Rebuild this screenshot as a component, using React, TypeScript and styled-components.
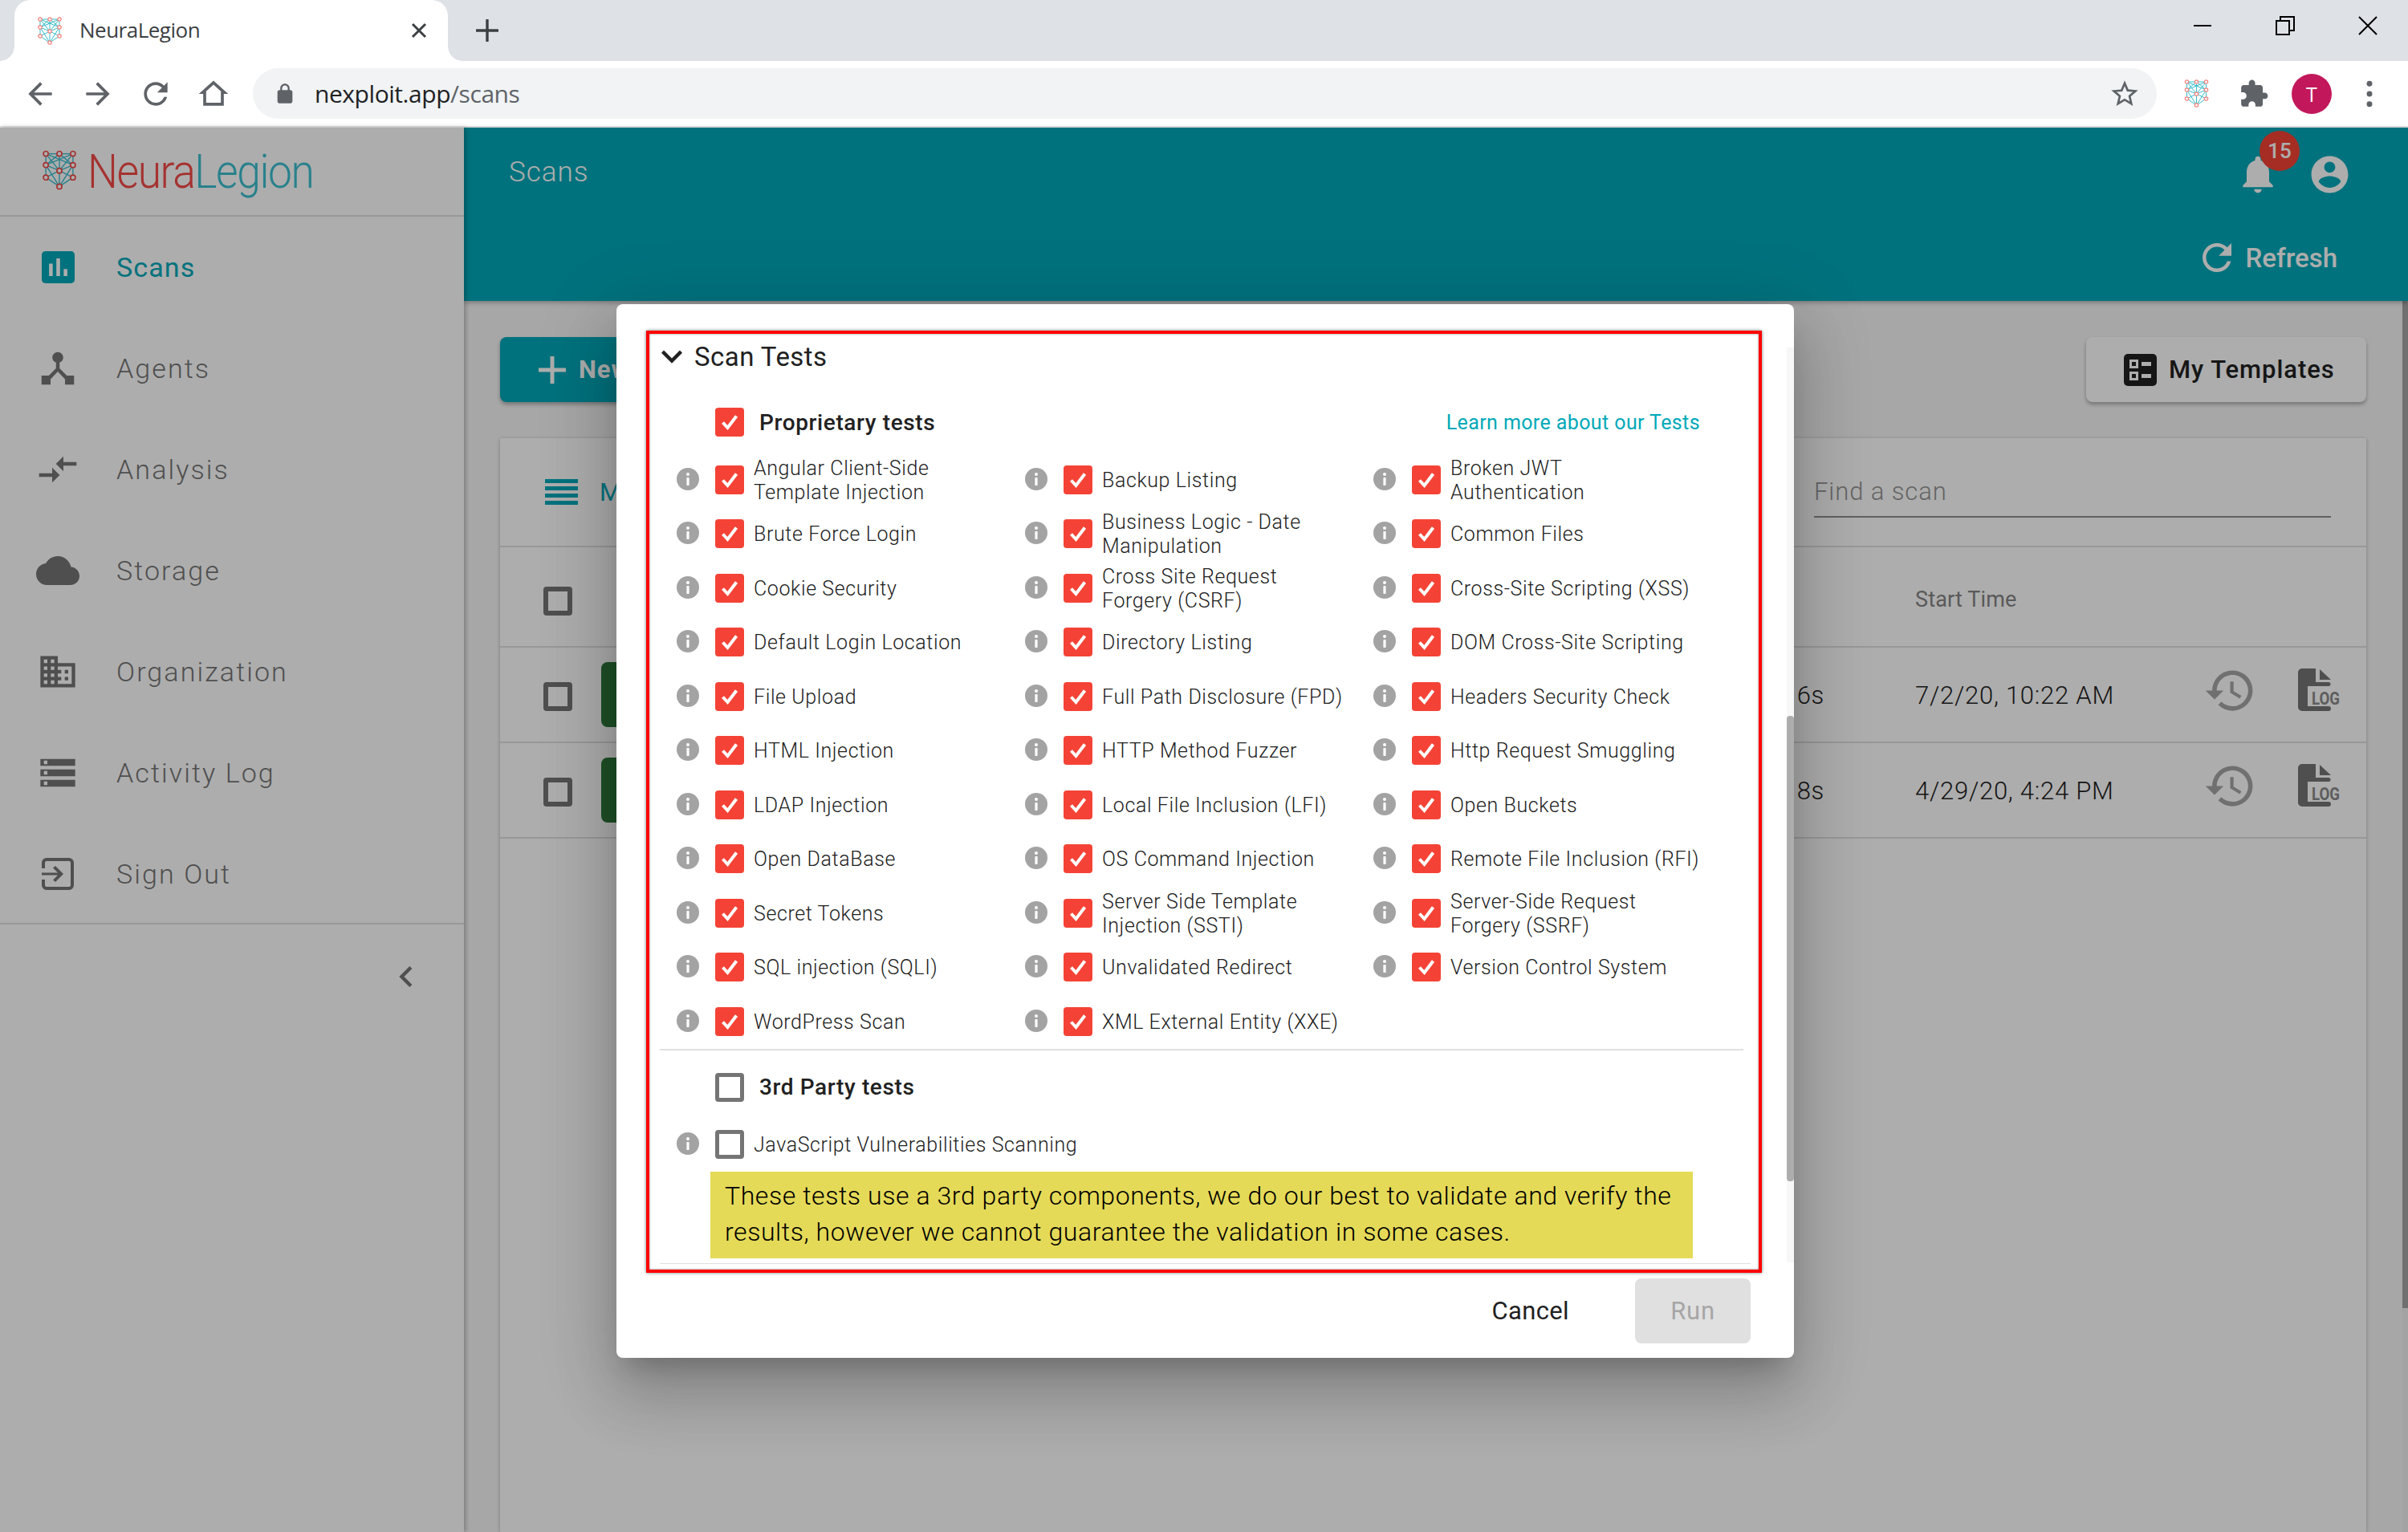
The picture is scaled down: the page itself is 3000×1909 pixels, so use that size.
import React from "react";
import styled, { createGlobalStyle } from "styled-components";

const Global = createGlobalStyle`
  html, body { margin: 0; padding: 0; background: #fff; }
  body { font-family: Roboto, "Liberation Sans", sans-serif; color: #212121; }
  #root { width: 3000px; height: 1909px; overflow: hidden; }
  * { box-sizing: border-box; }
`;

const TEAL = "#00a9b8";

const Page = styled.div`
  width: 3000px;
  height: 1909px;
  display: flex;
  flex-direction: column;
  overflow: hidden;
`;

/* ---------- Browser chrome ---------- */
const TabStrip = styled.div`
  height: 76px;
  background: #dee1e6;
  display: flex;
  align-items: stretch;
  padding-left: 18px;
`;
const Tab = styled.div`
  width: 540px;
  background: #fff;
  border-radius: 20px 20px 0 0;
  display: flex;
  align-items: center;
  padding-left: 28px;
  position: relative;
  &::before, &::after {
    content: "";
    position: absolute;
    bottom: 0;
    width: 18px;
    height: 18px;
  }
  &::before { left: -18px; background: radial-gradient(circle at 0 0, #dee1e6 17.5px, #fff 18px); }
  &::after { right: -18px; background: radial-gradient(circle at 100% 0, #dee1e6 17.5px, #fff 18px); }
`;
const TabTitle = styled.span`
  font-family: "Open Sans", sans-serif;
  font-size: 26px;
  letter-spacing: -0.5px;
  color: #3c4043;
  margin: -2px 0 0 21px;
  flex: 1;
`;
const TabClose = styled.svg`
  width: 20px;
  height: 20px;
  margin-right: 26px;
`;
const NewTab = styled.svg`
  width: 28px;
  height: 28px;
  margin: 24px 0 0 35px;
`;
const WindowControls = styled.div`
  margin-left: auto;
  display: flex;
  align-items: flex-start;
  padding: 20px 38px 0 0;
  gap: 79px;
`;
const WinIcon = styled.svg`
  width: 24px;
  height: 24px;
`;
const ToolBar = styled.div`
  height: 83px;
  background: #fff;
  border-bottom: 2px solid #e3e3e3;
  display: flex;
  align-items: center;
  padding-left: 14px;
`;
const ToolSlot = styled.div`
  width: 72px;
  height: 60px;
  display: flex;
  align-items: center;
  justify-content: center;
  flex-shrink: 0;
`;
const ToolIcon = styled.svg<{ $size?: number }>`
  width: ${(p) => p.$size ?? 44}px;
  height: ${(p) => p.$size ?? 44}px;
  fill: #5f6368;
`;
const AddressBar = styled.div`
  width: 2372px;
  height: 63px;
  margin: 0 13px;
  border-radius: 32px;
  background: #f1f3f4;
  display: flex;
  align-items: center;
  padding: 0 20px 0 26px;
  flex-shrink: 0;
`;
const LockIcon = styled.svg`
  width: 28px;
  height: 28px;
  fill: #5f6368;
`;
const Url = styled.span`
  font-family: "Open Sans", sans-serif;
  font-size: 30px;
  letter-spacing: -0.45px;
  color: #202124;
  margin-left: 23px;
  flex: 1;
  span { color: #5f6368; }
`;
const Avatar = styled.div`
  width: 50px;
  height: 50px;
  border-radius: 50%;
  background: #c2185b;
  color: #fff;
  font-family: "Open Sans", sans-serif;
  font-size: 25px;
  display: flex;
  align-items: center;
  justify-content: center;
`;

/* ---------- App shell ---------- */
const AppBody = styled.div`
  flex: 1;
  display: flex;
  position: relative;
  min-height: 0;
`;
const Sidebar = styled.aside`
  width: 578px;
  flex-shrink: 0;
  background: #fff;
  box-shadow: 2px 0 6px rgba(0, 0, 0, 0.28);
  z-index: 2;
  display: flex;
  flex-direction: column;
`;
const LogoRow = styled.div`
  height: 111px;
  border-bottom: 2px solid #e0e0e0;
  display: flex;
  align-items: center;
  padding: 0 0 4px 51px;
`;
const LogoName = styled.div`
  font-weight: 300;
  font-size: 60px;
  letter-spacing: -1.6px;
  margin: 4px 0 0 12px;
  color: #3bbfce;
  transform: scaleX(0.89);
  transform-origin: left center;
  span { color: #f44a48; }
`;
const NavList = styled.nav`
  border-bottom: 2px solid #e0e0e0;
  height: 882px;
`;
const NavItem = styled.div<{ $active?: boolean }>`
  height: 126px;
  display: flex;
  align-items: center;
  font-size: 34px;
  font-weight: ${(p) => (p.$active ? 400 : 300)};
  letter-spacing: ${(p) => (p.$active ? 1.1 : 2.1)}px;
  color: ${(p) => (p.$active ? TEAL : "#757575")};
`;
const NavIconSlot = styled.div`
  width: 90px;
  margin: 0 28px 0 27px;
  display: flex;
  justify-content: center;
  align-items: center;
`;
const NavIcon = styled.svg<{ $active?: boolean; $w: number; $h: number }>`
  width: ${(p) => p.$w}px;
  height: ${(p) => p.$h}px;
  fill: ${(p) => (p.$active ? TEAL : "#757575")};
`;
const CollapseRow = styled.div`
  height: 130px;
  display: flex;
  justify-content: flex-end;
  align-items: center;
  padding: 0 46px 0 0;
`;
const Main = styled.main`
  flex: 1;
  min-width: 0;
  display: flex;
  flex-direction: column;
`;
const Header = styled.header`
  height: 216px;
  background: ${TEAL};
  box-shadow: 0 2px 6px rgba(0, 0, 0, 0.3);
  z-index: 1;
  color: #fff;
  display: flex;
  flex-direction: column;
`;
const HeaderTop = styled.div`
  height: 112px;
  display: flex;
  align-items: center;
  padding: 4px 70px 0 56px;
`;
const HeaderTitle = styled.div`
  font-size: 35px;
  font-weight: 300;
  letter-spacing: 1px;
  margin-top: -5px;
  flex: 1;
`;
const HeaderIcons = styled.div`
  display: flex;
  align-items: center;
  gap: 34px;
`;
const BellWrap = styled.div`
  position: relative;
  width: 56px;
  height: 56px;
`;
const HeaderIcon = styled.svg<{ $size: number }>`
  width: ${(p) => p.$size}px;
  height: ${(p) => p.$size}px;
  fill: #fff;
  display: block;
`;
const Badge = styled.div`
  position: absolute;
  left: 30px;
  top: -26px;
  width: 50px;
  height: 50px;
  border-radius: 50%;
  background: #f44336;
  font-size: 26px;
  font-weight: 500;
  display: flex;
  align-items: center;
  justify-content: center;
`;
const HeaderBottom = styled.div`
  flex: 1;
  display: flex;
  align-items: center;
  justify-content: flex-end;
  padding: 0 88px 4px 0;
  gap: 9px;
  font-size: 33px;
  font-weight: 500;
`;
const Content = styled.div`
  flex: 1;
  min-height: 0;
  background: #f7f7f7;
  padding: 45px 52px 0 45px;
  display: flex;
  flex-direction: column;
  position: relative;
`;
const PageRail = styled.div`
  position: absolute;
  right: 0;
  top: 0;
  bottom: 0;
  width: 7px;
  background: #f1f1f1;
`;
const PageThumb = styled.div`
  height: 1255px;
  background: #a5a5a5;
`;
const ActionRow = styled.div`
  height: 81px;
  display: flex;
  justify-content: space-between;
`;
const PrimaryButton = styled.div`
  width: 360px;
  background: ${TEAL};
  color: #fff;
  border-radius: 8px;
  box-shadow: 0 3px 5px rgba(0, 0, 0, 0.3);
  display: flex;
  align-items: center;
  padding-left: 42px;
  gap: 10px;
  font-size: 31px;
  font-weight: 700;
  letter-spacing: 1px;
`;
const SecondaryButton = styled.div`
  width: 349px;
  background: #fff;
  color: #212121;
  border-radius: 8px;
  box-shadow: 0 3px 5px rgba(0, 0, 0, 0.3);
  display: flex;
  align-items: center;
  padding-left: 47px;
  gap: 15px;
  font-size: 31px;
  font-weight: 500;
  letter-spacing: 0.95px;
`;
const Card = styled.section`
  flex: 1;
  min-height: 0;
  margin-top: 45px;
  background: #fff;
  box-shadow: 0 1px 5px rgba(0, 0, 0, 0.25);
`;
const CardBar = styled.div`
  height: 136px;
  border-bottom: 2px solid #e0e0e0;
  display: flex;
  align-items: center;
  padding: 0 44px 0 56px;
`;
const ListIcon = styled.svg`
  width: 41px;
  height: 32px;
  fill: ${TEAL};
`;
const CardTitle = styled.div`
  margin-left: 27px;
  font-size: 31px;
  color: ${TEAL};
`;
const SearchField = styled.div`
  margin-left: auto;
  width: 644px;
  height: 62px;
  margin-top: 2px;
  border-bottom: 2px solid #8f8f8f;
  color: #949494;
  font-size: 31px;
  font-weight: 300;
  letter-spacing: 0.9px;
  padding-top: 11px;
`;
const TableHead = styled.div`
  height: 125px;
  border-bottom: 2px solid #e0e0e0;
  display: flex;
  align-items: center;
  padding: 6px 0 0 54px;
`;
const HeadCell = styled.div`
  margin-left: auto;
  width: 562px;
  font-size: 27px;
  font-weight: 400;
  letter-spacing: 0.15px;
  color: #858585;
`;
const TableRow = styled.div`
  height: 119px;
  border-bottom: 2px solid #e0e0e0;
  display: flex;
  align-items: center;
  padding: 0 33px 0 54px;
`;
const RowCheck = styled.span`
  width: 36px;
  height: 36px;
  margin-top: 4px;
  border: 6px solid #757575;
  border-radius: 4px;
  flex-shrink: 0;
`;
const StatusChip = styled.span`
  width: 200px;
  height: 81px;
  border-radius: 8px;
  margin-left: 36px;
  background: #2e783a;
`;
const Duration = styled.div`
  margin-left: auto;
  margin-right: 113px;
  padding-top: 2px;
  font-size: 31px;
  color: #212121;
  font-weight: 300;
  letter-spacing: 0.7px;
`;
const TimeCell = styled.div`
  width: 359px;
  padding-top: 2px;
  font-size: 31px;
  font-weight: 300;
  letter-spacing: 0.75px;
  color: #212121;
`;
const HistoryIcon = styled.svg`
  width: 67px;
  height: 67px;
  fill: #a6a6a6;
  margin-top: -10px;
`;
const LogIcon = styled.svg`
  width: 52px;
  height: 54px;
  margin: -12px 0 0 51px;
  overflow: visible;
`;

/* ---------- Dialog ---------- */
const Backdrop = styled.div`
  position: absolute;
  inset: 0;
  z-index: 5;
  background: rgba(0, 0, 0, 0.32);
  padding: 220px 0 0 768px;
`;
const Modal = styled.div`
  position: relative;
  width: 1467px;
  height: 1313px;
  background: #fff;
  border-radius: 8px;
  padding-top: 40px;
  display: flex;
  flex-direction: column;
  box-shadow: 0 22px 30px -14px rgba(0, 0, 0, 0.2), 0 48px 76px 6px rgba(0, 0, 0, 0.14),
    0 18px 92px 16px rgba(0, 0, 0, 0.12);
`;
const Body = styled.div`
  position: relative;
  height: 1156px;
  padding: 12px 54px 0;
  overflow: hidden;
`;
const TitleRow = styled.div`
  height: 26px;
  display: flex;
  align-items: center;
  font-size: 33px;
  font-weight: 400;
  letter-spacing: 0.45px;
  color: #212121;
`;
const Chevron = styled.svg`
  width: 52px;
  height: 52px;
  margin: 0 2px 0 -11px;
  flex-shrink: 0;
  fill: #212121;
`;
const GroupHead = styled.div<{ $top: number }>`
  margin-top: ${(p) => p.$top}px;
  height: 36px;
  display: flex;
  align-items: center;
  padding: 0 63px 0 69px;
  gap: 19px;
  font-size: 28px;
  font-weight: 500;
  letter-spacing: 0.62px;
`;
const LearnLink = styled.a`
  margin-left: auto;
  font-size: 25px;
  font-weight: 400;
  letter-spacing: 0.4px;
  color: #00a9b8;
`;
const TestGrid = styled.div`
  margin-top: 20px;
  padding-left: 21px;
  display: grid;
  grid-template-columns: repeat(3, 434px);
  grid-auto-rows: 67.5px;
`;
const TestCell = styled.div`
  display: flex;
  align-items: center;
`;
const InfoDot = styled.svg`
  width: 28px;
  height: 28px;
  flex-shrink: 0;
  margin: -2px 20px 0 0;
`;
const Box = styled.span<{ $checked?: boolean }>`
  width: 36px;
  height: 36px;
  flex-shrink: 0;
  border-radius: 4px;
  background: ${(p) => (p.$checked ? "#f44336" : "#fff")};
  border: ${(p) => (p.$checked ? "none" : "5px solid #757575")};
  display: flex;
`;
const TestLabel = styled.span`
  margin: 2px 0 0 12px;
  font-size: 25px;
  font-weight: 300;
  letter-spacing: 0.6px;
  line-height: 30px;
  white-space: pre;
  color: #212121;
`;
const Separator = styled.div<{ $top?: number; $end?: number }>`
  height: 2px;
  margin-top: ${(p) => p.$top ?? 0}px;
  margin-right: ${(p) => p.$end ?? 0}px;
  background: #e0e0e0;
`;
const Notice = styled.div`
  margin-left: 63px;
  width: 1224px;
  height: 108px;
  background: #e5da58;
  padding: 8px 18px 0;
  font-size: 32px;
  font-weight: 300;
  line-height: 44.5px;
  letter-spacing: 0.57px;
  color: #000;
  white-space: pre;
`;
const ScrollTrack = styled.div`
  position: absolute;
  right: 0;
  top: 14px;
  bottom: 2px;
  width: 9px;
  background: #f7f7f7;
`;
const ScrollThumb = styled.div`
  margin-top: 459px;
  height: 580px;
  border-radius: 4px;
  background: #adadad;
`;
const Footer = styled.div`
  display: flex;
  align-items: center;
  justify-content: flex-end;
  padding: 18px 54px 0 0;
`;
const CancelButton = styled.div`
  margin-right: 82px;
  font-size: 31px;
  font-weight: 400;
  letter-spacing: 0.35px;
  color: #212121;
`;
const RunButton = styled.div`
  width: 144px;
  height: 81px;
  border-radius: 8px;
  background: #e0e0e0;
  color: #a6a6a6;
  font-size: 31px;
  font-weight: 400;
  letter-spacing: 0.8px;
  display: flex;
  align-items: center;
  justify-content: center;
`;
const RedFrame = styled.div`
  position: absolute;
  left: 37px;
  top: 33px;
  width: 1390px;
  height: 1174px;
  border: 4px solid #ff0000;
  box-shadow: 0 0 4px rgba(0, 0, 0, 0.55), inset 0 0 3px rgba(0, 0, 0, 0.45);
  pointer-events: none;
`;

/* ---------- Drawings ---------- */
const NET_NODES = [
  [4, 4], [16, 4], [28, 4], [4, 14], [28, 14], [16, 19], [4, 25], [28, 25], [16, 33],
];
const NET_LINES = [
  [0, 1], [1, 2], [0, 3], [2, 4], [3, 6], [4, 7], [6, 8], [7, 8], [0, 5], [2, 5], [1, 5],
  [1, 3], [1, 4], [3, 5], [4, 5], [5, 8], [5, 6], [5, 7], [3, 8], [4, 8], [0, 4], [2, 3],
];

const NetLogo = ({ w, h, line, node }: { w: number; h: number; line: string; node: string }) => (
  <svg width={w} height={h} viewBox="0 0 32 37" style={{ flexShrink: 0 }}>
    {NET_LINES.map(([a, b], i) => (
      <line key={i} x1={NET_NODES[a][0]} y1={NET_NODES[a][1]} x2={NET_NODES[b][0]} y2={NET_NODES[b][1]} stroke={line} strokeWidth="1" />
    ))}
    {NET_NODES.map(([x, y], i) => (
      <circle key={i} cx={x} cy={y} r="2.2" fill="#fff" stroke={node} strokeWidth="1.2" />
    ))}
  </svg>
);

const Check = () => (
  <svg width="36" height="36" viewBox="0 0 36 36">
    <path d="M9.5 18.5 L15.5 25 L26.5 10.5" fill="none" stroke="#fff" strokeWidth="4" />
  </svg>
);

const Info = () => (
  <InfoDot viewBox="0 0 28 28">
    <circle cx="14" cy="14" r="14" fill="#a3a3a3" />
    <circle cx="14" cy="8" r="2" fill="#fff" />
    <rect x="12.4" y="12" width="3.2" height="10" rx="0.8" fill="#fff" />
  </InfoDot>
);

const TEMPLATE_ICON = (
  <svg width="41" height="40" viewBox="0 0 41 40" style={{ flexShrink: 0 }}>
    <rect width="41" height="40" rx="5" fill="#212121" />
    <path d="M7 7h11v11H7zM10 10v5h5v-5zM7 22h11v11H7zM10 25v5h5v-5z" fill="#fff" fillRule="evenodd" />
    <rect x="22" y="10" width="12" height="5" fill="#fff" />
    <rect x="22" y="25" width="12" height="5" fill="#fff" />
  </svg>
);

const HISTORY = "M13 3c-4.97 0-9 4.03-9 9H1l3.89 3.89.07.14L9 12H6c0-3.87 3.13-7 7-7s7 3.13 7 7-3.13 7-7 7c-1.93 0-3.68-.79-4.94-2.06l-1.42 1.42C8.27 19.99 10.51 21 13 21c4.97 0 9-4.03 9-9s-4.03-9-9-9zm-1 5v5l4.28 2.54.72-1.21-3.5-2.08V8H12z";

const LogFile = () => (
  <LogIcon viewBox="0 0 52 54">
    <path d="M5 0H22V17H38a2.5 2.5 0 0 1 0 5H12V47H38a3 3 0 0 1 0 6H5a5 5 0 0 1-5-5V5a5 5 0 0 1 5-5z" fill="#757575" />
    <path d="M27 1V14H41z" fill="#757575" />
    <text x="17" y="44.500" fontFamily="Roboto, sans-serif" fontSize="22" fontWeight="700" fill="#8a8a8a" textLength="35" lengthAdjust="spacingAndGlyphs">LOG</text>
  </LogIcon>
);

const NAV = [
  { label: "Agents", w: 54, h: 54, box: "0 0 24 24", d: "M17 16l-4-4V8.82C14.16 8.4 15 7.3 15 6c0-1.66-1.34-3-3-3S9 4.34 9 6c0 1.3.84 2.4 2 2.82V12l-4 4H3v5h5v-3.05l4-4.2 4 4.2V21h5v-5h-4z" },
  { label: "Analysis", w: 56, h: 56, box: "0 0 24 24", d: "M9.01 14H2v2h7.01v3L13 15l-3.99-4v3zm5.98-1v-3H22V8h-7.01V5L11 9l3.99 4z" },
  { label: "Storage", w: 54, h: 54, box: "0 0 24 24", d: "M19.35 10.04C18.67 6.59 15.64 4 12 4 9.11 4 6.6 5.64 5.35 8.04 2.34 8.36 0 10.91 0 14c0 3.31 2.69 6 6 6h13c2.76 0 5-2.24 5-5 0-2.64-2.05-4.78-4.65-4.96z" },
  { label: "Organization", w: 56, h: 52, box: "0 0 24 24", d: "M12 7V3H2v18h20V7H12zM6 19H4v-2h2v2zm0-4H4v-2h2v2zm0-4H4V9h2v2zm0-4H4V5h2v2zm4 12H8v-2h2v2zm0-4H8v-2h2v2zm0-4H8V9h2v2zm0-4H8V5h2v2zm10 12h-8v-2h2v-2h-2v-2h2v-2h-2V9h8v10zm-2-8h-2v2h2v-2zm0 4h-2v2h2v-2z" },
  { label: "Activity Log", w: 56, h: 52, box: "0 0 24 24", d: "M2 20h20v-4H2v4zm2-3h2v2H4v-2zM2 4v4h20V4H2zm4 3H4V5h2v2zm-4 7h20v-4H2v4zm2-3h2v2H4v-2z" },
  { label: "Sign Out", w: 40, h: 40, box: "0 0 40 40", d: "M6 0H34a6 6 0 0 1 6 6V34a6 6 0 0 1-6 6H6a6 6 0 0 1-6-6V27H4V34a2 2 0 0 0 2 2H34a2 2 0 0 0 2-2V6a2 2 0 0 0-2-2H6a2 2 0 0 0-2 2V13H0V6a6 6 0 0 1 6-6zM0 18.500H20L14 12.500L17 10L27 20L17 30L14 27.500L20 21.500H0z" },
];

const TESTS = [
  "Angular Client-Side\nTemplate Injection", "Backup Listing", "Broken JWT\nAuthentication",
  "Brute Force Login", "Business Logic - Date\nManipulation", "Common Files",
  "Cookie Security", "Cross Site Request\nForgery (CSRF)", "Cross-Site Scripting (XSS)",
  "Default Login Location", "Directory Listing", "DOM Cross-Site Scripting",
  "File Upload", "Full Path Disclosure (FPD)", "Headers Security Check",
  "HTML Injection", "HTTP Method Fuzzer", "Http Request Smuggling",
  "LDAP Injection", "Local File Inclusion (LFI)", "Open Buckets",
  "Open DataBase", "OS Command Injection", "Remote File Inclusion (RFI)",
  "Secret Tokens", "Server Side Template\nInjection (SSTI)", "Server-Side Request\nForgery (SSRF)",
  "SQL injection (SQLI)", "Unvalidated Redirect", "Version Control System",
  "WordPress Scan", "XML External Entity (XXE)",
];

const SCANS = [
  { dur: "6s", time: "7/2/20, 10:22 AM" },
  { dur: "8s", time: "4/29/20, 4:24 PM" },
];

export default function App() {
  return (
    <Page>
      <Global />
      <TabStrip>
        <Tab>
          <NetLogo w={32} h={37} line="#33bccb" node="#f27f7a" />
          <TabTitle>NeuraLegion</TabTitle>
          <TabClose viewBox="0 0 20 20">
            <path d="M2 2 L18 18 M18 2 L2 18" stroke="#3c4043" strokeWidth="3" />
          </TabClose>
        </Tab>
        <NewTab viewBox="0 0 28 28">
          <path d="M14 1 V27 M1 14 H27" stroke="#3c4043" strokeWidth="3.4" strokeLinecap="round" />
        </NewTab>
        <WindowControls>
          <WinIcon viewBox="0 0 24 24">
            <path d="M1 12 H23" stroke="#000" strokeWidth="2" />
          </WinIcon>
          <WinIcon viewBox="0 0 24 24">
            <path d="M1 6 H17 V23 H1 Z M6 6 V1 H23 V18 H17" fill="none" stroke="#000" strokeWidth="2" />
          </WinIcon>
          <WinIcon viewBox="0 0 24 24">
            <path d="M1 1 L23 23 M23 1 L1 23" stroke="#000" strokeWidth="2" />
          </WinIcon>
        </WindowControls>
      </TabStrip>
      <ToolBar>
        <ToolSlot>
          <ToolIcon viewBox="0 0 24 24"><path d="M20 11H7.83l5.59-5.59L12 4l-8 8 8 8 1.41-1.41L7.83 13H20v-2z" /></ToolIcon>
        </ToolSlot>
        <ToolSlot>
          <ToolIcon viewBox="0 0 24 24"><path d="M12 4l-1.41 1.41L16.17 11H4v2h12.17l-5.58 5.59L12 20l8-8z" /></ToolIcon>
        </ToolSlot>
        <ToolSlot>
          <ToolIcon viewBox="0 0 24 24"><path d="M17.65 6.35C16.2 4.9 14.21 4 12 4c-4.42 0-7.99 3.58-7.99 8s3.57 8 7.99 8c3.730 0 6.84-2.55 7.73-6h-2.08c-.82 2.33-3.04 4-5.65 4-3.31 0-6-2.69-6-6s2.69-6 6-6c1.66 0 3.14.69 4.22 1.78L13 11h7V4l-2.35 2.35z" /></ToolIcon>
        </ToolSlot>
        <ToolSlot>
          <ToolIcon viewBox="0 0 24 24"><path d="M12 5.69l5 4.5V18H7v-7.81l5-4.5M12 3L2 12h3v8h14v-8h3L12 3z" /></ToolIcon>
        </ToolSlot>
        <AddressBar>
          <LockIcon viewBox="0 0 24 24"><path d="M18 8h-1V6c0-2.76-2.24-5-5-5S7 3.24 7 6v2H6c-1.100 0-2 .9-2 2v10c0 1.100.9 2 2 2h12c1.100 0 2-.9 2-2V10c0-1.100-.9-2-2-2zM9 8V6c0-1.660 1.340-3 3-3s3 1.340 3 3v2H9z" /></LockIcon>
          <Url>nexploit.app<span>/scans</span></Url>
          <ToolIcon $size={40} viewBox="0 0 24 24"><path d="M22 9.24l-7.19-.62L12 2 9.19 8.63 2 9.24l5.46 4.73L5.82 21 12 17.27 18.18 21l-1.63-7.03L22 9.24zM12 15.4l-3.76 2.27 1-4.28-3.32-2.88 4.38-.38L12 6.1l1.71 4.04 4.38.38-3.32 2.88 1 4.28L12 15.4z" /></ToolIcon>
        </AddressBar>
        <ToolSlot><NetLogo w={33} h={37} line="#33bccb" node="#f27f7a" /></ToolSlot>
        <ToolSlot>
          <ToolIcon $size={38} viewBox="0 0 24 24"><path d="M20.5 11H19V7c0-1.100-.9-2-2-2h-4V3.500C13 2.120 11.880 1 10.500 1S8 2.120 8 3.500V5H4c-1.100 0-1.990.9-1.990 2v3.800H3.500c1.490 0 2.700 1.210 2.700 2.700s-1.210 2.700-2.700 2.700H2V20c0 1.100.9 2 2 2h3.800v-1.500c0-1.490 1.210-2.700 2.700-2.700 1.490 0 2.700 1.210 2.700 2.700V22H17c1.100 0 2-.9 2-2v-4h1.500c1.380 0 2.500-1.120 2.500-2.500S21.880 11 20.500 11z" /></ToolIcon>
        </ToolSlot>
        <ToolSlot><Avatar>T</Avatar></ToolSlot>
        <ToolSlot>
          <ToolIcon $size={44} viewBox="0 0 24 24"><circle cx="12" cy="5" r="1.900" /><circle cx="12" cy="12" r="1.900" /><circle cx="12" cy="19" r="1.900" /></ToolIcon>
        </ToolSlot>
      </ToolBar>

      <AppBody>
        <Sidebar>
          <LogoRow>
            <NetLogo w={46} h={52} line="#3bbfce" node="#f44a48" />
            <LogoName><span>Neura</span>Legion</LogoName>
          </LogoRow>
          <NavList>
            <NavItem $active>
              <NavIconSlot>
                <NavIcon $active $w={41} $h={40} viewBox="3 3 18 18" preserveAspectRatio="none">
                  <path d="M19 3H5c-1.100 0-2 .9-2 2v14c0 1.100.9 2 2 2h14c1.100 0 2-.9 2-2V5c0-1.100-.9-2-2-2zM9 17H7v-7h2v7zm4 0h-2V7h2v10zm4 0h-2v-4h2v4z" />
                </NavIcon>
              </NavIconSlot>
              Scans
            </NavItem>
            {NAV.map((n) => (
              <NavItem key={n.label}>
                <NavIconSlot>
                  <NavIcon $w={n.w} $h={n.h} viewBox={n.box}><path d={n.d} /></NavIcon>
                </NavIconSlot>
                {n.label}
              </NavItem>
            ))}
          </NavList>
          <CollapseRow>
            <NavIcon $w={52} $h={52} viewBox="0 0 24 24">
              <path d="M15.41 7.41L14 6l-6 6 6 6 1.41-1.41L10.830 12z" />
            </NavIcon>
          </CollapseRow>
        </Sidebar>

        <Main>
          <Header>
            <HeaderTop>
              <HeaderTitle>Scans</HeaderTitle>
              <HeaderIcons>
                <BellWrap>
                  <HeaderIcon $size={56} viewBox="0 0 24 24">
                    <path d="M12 22c1.100 0 2-.9 2-2h-4c0 1.100.9 2 2 2zm6-6v-5c0-3.070-1.640-5.640-4.500-6.320V4c0-.83-.67-1.500-1.500-1.500s-1.500.67-1.500 1.500v.68C7.630 5.360 6 7.920 6 11v5l-2 2v1h16v-1l-2-2z" />
                  </HeaderIcon>
                  <Badge>15</Badge>
                </BellWrap>
                <HeaderIcon $size={55} viewBox="0 0 24 24">
                  <path d="M12 2C6.480 2 2 6.480 2 12s4.480 10 10 10 10-4.480 10-10S17.520 2 12 2zm0 3c1.660 0 3 1.340 3 3s-1.340 3-3 3-3-1.340-3-3 1.340-3 3-3zm0 14.200c-2.500 0-4.710-1.280-6-3.220.03-1.990 4-3.080 6-3.080 1.990 0 5.970 1.090 6 3.080-1.290 1.940-3.500 3.220-6 3.220z" />
                </HeaderIcon>
              </HeaderIcons>
            </HeaderTop>
            <HeaderBottom>
              <HeaderIcon $size={54} viewBox="0 0 24 24">
                <path d="M17.65 6.35C16.2 4.9 14.21 4 12 4c-4.420 0-7.990 3.580-7.990 8s3.570 8 7.990 8c3.730 0 6.840-2.550 7.730-6h-2.080c-.82 2.330-3.040 4-5.650 4-3.310 0-6-2.690-6-6s2.690-6 6-6c1.660 0 3.140.69 4.220 1.780L13 11h7V4l-2.350 2.350z" />
              </HeaderIcon>
              Refresh
            </HeaderBottom>
          </Header>
          <Content>
            <ActionRow>
              <PrimaryButton>
                <svg width="46" height="46" viewBox="0 0 46 46">
                  <path d="M23 6 V40 M6 23 H40" stroke="#fff" strokeWidth="5" />
                </svg>
                New Scan
              </PrimaryButton>
              <SecondaryButton>{TEMPLATE_ICON}My Templates</SecondaryButton>
            </ActionRow>
            <Card>
              <CardBar>
                <ListIcon viewBox="0 0 41 32">
                  <rect width="41" height="5" /><rect y="9" width="41" height="5" /><rect y="18" width="41" height="5" /><rect y="27" width="41" height="5" />
                </ListIcon>
                <CardTitle>My Scans</CardTitle>
                <SearchField>Find a scan</SearchField>
              </CardBar>
              <TableHead>
                <RowCheck />
                <HeadCell>Start Time</HeadCell>
              </TableHead>
              {SCANS.map((s) => (
                <TableRow key={s.time}>
                  <RowCheck />
                  <StatusChip />
                  <Duration>{s.dur}</Duration>
                  <TimeCell>{s.time}</TimeCell>
                  <HistoryIcon viewBox="0 0 24 24"><path d={HISTORY} /></HistoryIcon>
                  <LogFile />
                </TableRow>
              ))}
            </Card>
            <PageRail><PageThumb /></PageRail>
          </Content>
        </Main>

        <Backdrop>
          <Modal>
            <Body>
              <TitleRow>
                <Chevron viewBox="0 0 24 24">
                  <path d="M16.59 8.59L12 13.170 7.410 8.590 6 10l6 6 6-6z" />
                </Chevron>
                Scan Tests
              </TitleRow>
              <GroupHead $top={51}>
                <Box $checked><Check /></Box>
                Proprietary tests
                <LearnLink>Learn more about our Tests</LearnLink>
              </GroupHead>
              <TestGrid>
                {TESTS.map((t) => (
                  <TestCell key={t}>
                    <Info />
                    <Box $checked><Check /></Box>
                    <TestLabel>{t}</TestLabel>
                  </TestCell>
                ))}
              </TestGrid>
              <Separator $end={9} />
              <GroupHead $top={28}>
                <Box />
                3rd Party tests
              </GroupHead>
              <TestGrid>
                <TestCell>
                  <Info />
                  <Box />
                  <TestLabel>JavaScript Vulnerabilities Scanning</TestLabel>
                </TestCell>
              </TestGrid>
              <Notice>{"These tests use a 3rd party components, we do our best to validate and verify the\nresults, however we cannot guarantee the validation in some cases."}</Notice>
              <Separator $top={6} />
              <ScrollTrack><ScrollThumb /></ScrollTrack>
            </Body>
            <Footer>
              <CancelButton>Cancel</CancelButton>
              <RunButton>Run</RunButton>
            </Footer>
            <RedFrame />
          </Modal>
        </Backdrop>
      </AppBody>
    </Page>
  );
}
